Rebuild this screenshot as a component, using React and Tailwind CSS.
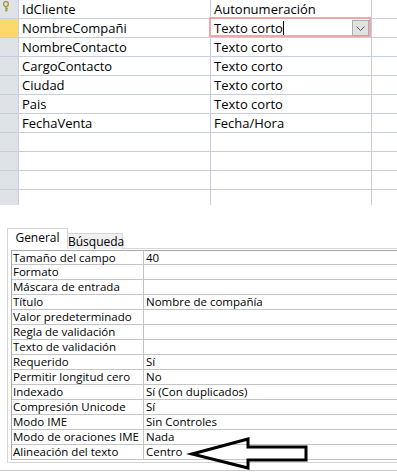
import React from 'react';

const fields = [
  { name: 'IdCliente', type: 'Autonumeración', key: true },
  { name: 'NombreCompañi', type: 'Texto corto', active: true },
  { name: 'NombreContacto', type: 'Texto corto' },
  { name: 'CargoContacto', type: 'Texto corto' },
  { name: 'Ciudad', type: 'Texto corto' },
  { name: 'Pais', type: 'Texto corto' },
  { name: 'FechaVenta', type: 'Fecha/Hora' },
  { name: '', type: '' },
  { name: '', type: '' },
  { name: '', type: '' },
];

const props = [
  ['Tamaño del campo', '40'],
  ['Formato', ''],
  ['Máscara de entrada', ''],
  ['Título', 'Nombre de compañía'],
  ['Valor predeterminado', ''],
  ['Regla de validación', ''],
  ['Texto de validación', ''],
  ['Requerido', 'Sí'],
  ['Permitir longitud cero', 'No'],
  ['Indexado', 'Sí (Con duplicados)'],
  ['Compresión Unicode', 'Sí'],
  ['Modo IME', 'Sin Controles'],
  ['Modo de oraciones IME', 'Nada'],
  ['Alineación del texto', 'Centro'],
];

const KeyIcon = () => (
  <svg width="8" height="11" viewBox="0 0 8 11" className="absolute left-[2px] top-[1px]">
    <circle cx="4" cy="3" r="2.4" fill="none" stroke="#a49b3c" strokeWidth="1.4" />
    <path d="M4 5.4V10.5M4 7.5H6M4 9.5H5.5" stroke="#a49b3c" strokeWidth="1.4" fill="none" />
  </svg>
);

export default function App() {
  return (
    <div className="relative w-[397px] h-[473px] overflow-hidden bg-white text-black" style={{ fontFamily: '"Open Sans", "Liberation Sans", sans-serif' }}>
      {/* Field grid */}
      <div className="flex flex-col text-[13px]">
        {fields.map((f, i) => (
          <div key={i} className="flex h-[19px] border-b border-[#c6cede]">
            <div className={`relative w-[19px] shrink-0 border-r border-[#c6cede] ${f.active ? 'bg-[#fdd86a]' : 'bg-[#dfe3e8]'}`}>
              {f.key && <KeyIcon />}
            </div>
            <div className="w-[192px] shrink-0 border-r border-[#c6cede] pl-[3px] leading-[18px]">{f.name}</div>
            <div className="relative w-[161px] shrink-0 border-r border-[#c6cede] pl-[3px] leading-[18px]">
              {f.type}
              {f.active && (
                <>
                  <span className="inline-block w-px h-[15px] bg-black align-[-3px]" />
                  <div className="absolute -left-[2px] -top-[2px] right-0 bottom-0 border-2 border-[#f4a5aa]" />
                  <div className="absolute right-[2px] top-px w-[17px] h-[16px] bg-[#e1e1e1] border border-[#adadad] flex items-center justify-center">
                    <svg width="9" height="5" viewBox="0 0 9 5">
                      <path d="M0.5 0.5L4.5 4.5L8.5 0.5" stroke="#555" strokeWidth="1" fill="none" />
                    </svg>
                  </div>
                </>
              )}
            </div>
            <div className="flex-1" />
          </div>
        ))}
        <div className="flex h-[15px]">
          <div className="w-[19px] shrink-0 border-r border-[#c6cede] bg-[#dfe3e8]" />
          <div className="w-[192px] shrink-0 border-r border-[#c6cede]" />
          <div className="w-[161px] shrink-0 border-r border-[#c6cede]" />
        </div>
      </div>

      {/* Property sheet */}
      <div className="mt-[23px] text-[11.5px]">
        <div className="flex items-end pl-[7px] -mb-px relative z-10">
          <div className="w-[61px] h-[21px] bg-white border border-b-0 border-[#d5d5d5] text-center leading-[18px] text-[12px]">General</div>
          <div className="w-[55px] h-[16px] bg-[#f0f0f0] border border-b-0 border-l-0 border-[#d5d5d5] text-center leading-[15px] text-[12px]">Búsqueda</div>
        </div>
        <div className="ml-[7px] border-l border-t border-b border-[#d5d5d5] pl-[3px] pt-px pb-[2px]">
          <div className="border-l border-t border-[#a9a9a9]">
            {props.map(([label, value], i) => (
              <div key={label} className={`flex border-b border-[#c4c4c4] leading-[14px] ${i === 0 ? 'h-[14px] leading-[13px]' : 'h-[15px]'}`}>
                <div className="w-[132px] shrink-0 border-r border-[#c4c4c4] pl-px whitespace-nowrap">{label}</div>
                <div className="flex-1 pl-[2px] whitespace-nowrap">{value}</div>
              </div>
            ))}
          </div>
        </div>
        <div className="mt-[7px] border-t border-[#c8c8c8]" />
      </div>

      {/* Annotation arrow */}
      <svg className="absolute left-0 top-0 pointer-events-none" width="397" height="473" viewBox="0 0 397 473">
        <polygon
          points="192,454 248,439 248,447 306,447 306,460 248,460 248,468"
          fill="none"
          stroke="#000"
          strokeWidth="3"
          strokeLinejoin="miter"
        />
      </svg>
    </div>
  );
}
